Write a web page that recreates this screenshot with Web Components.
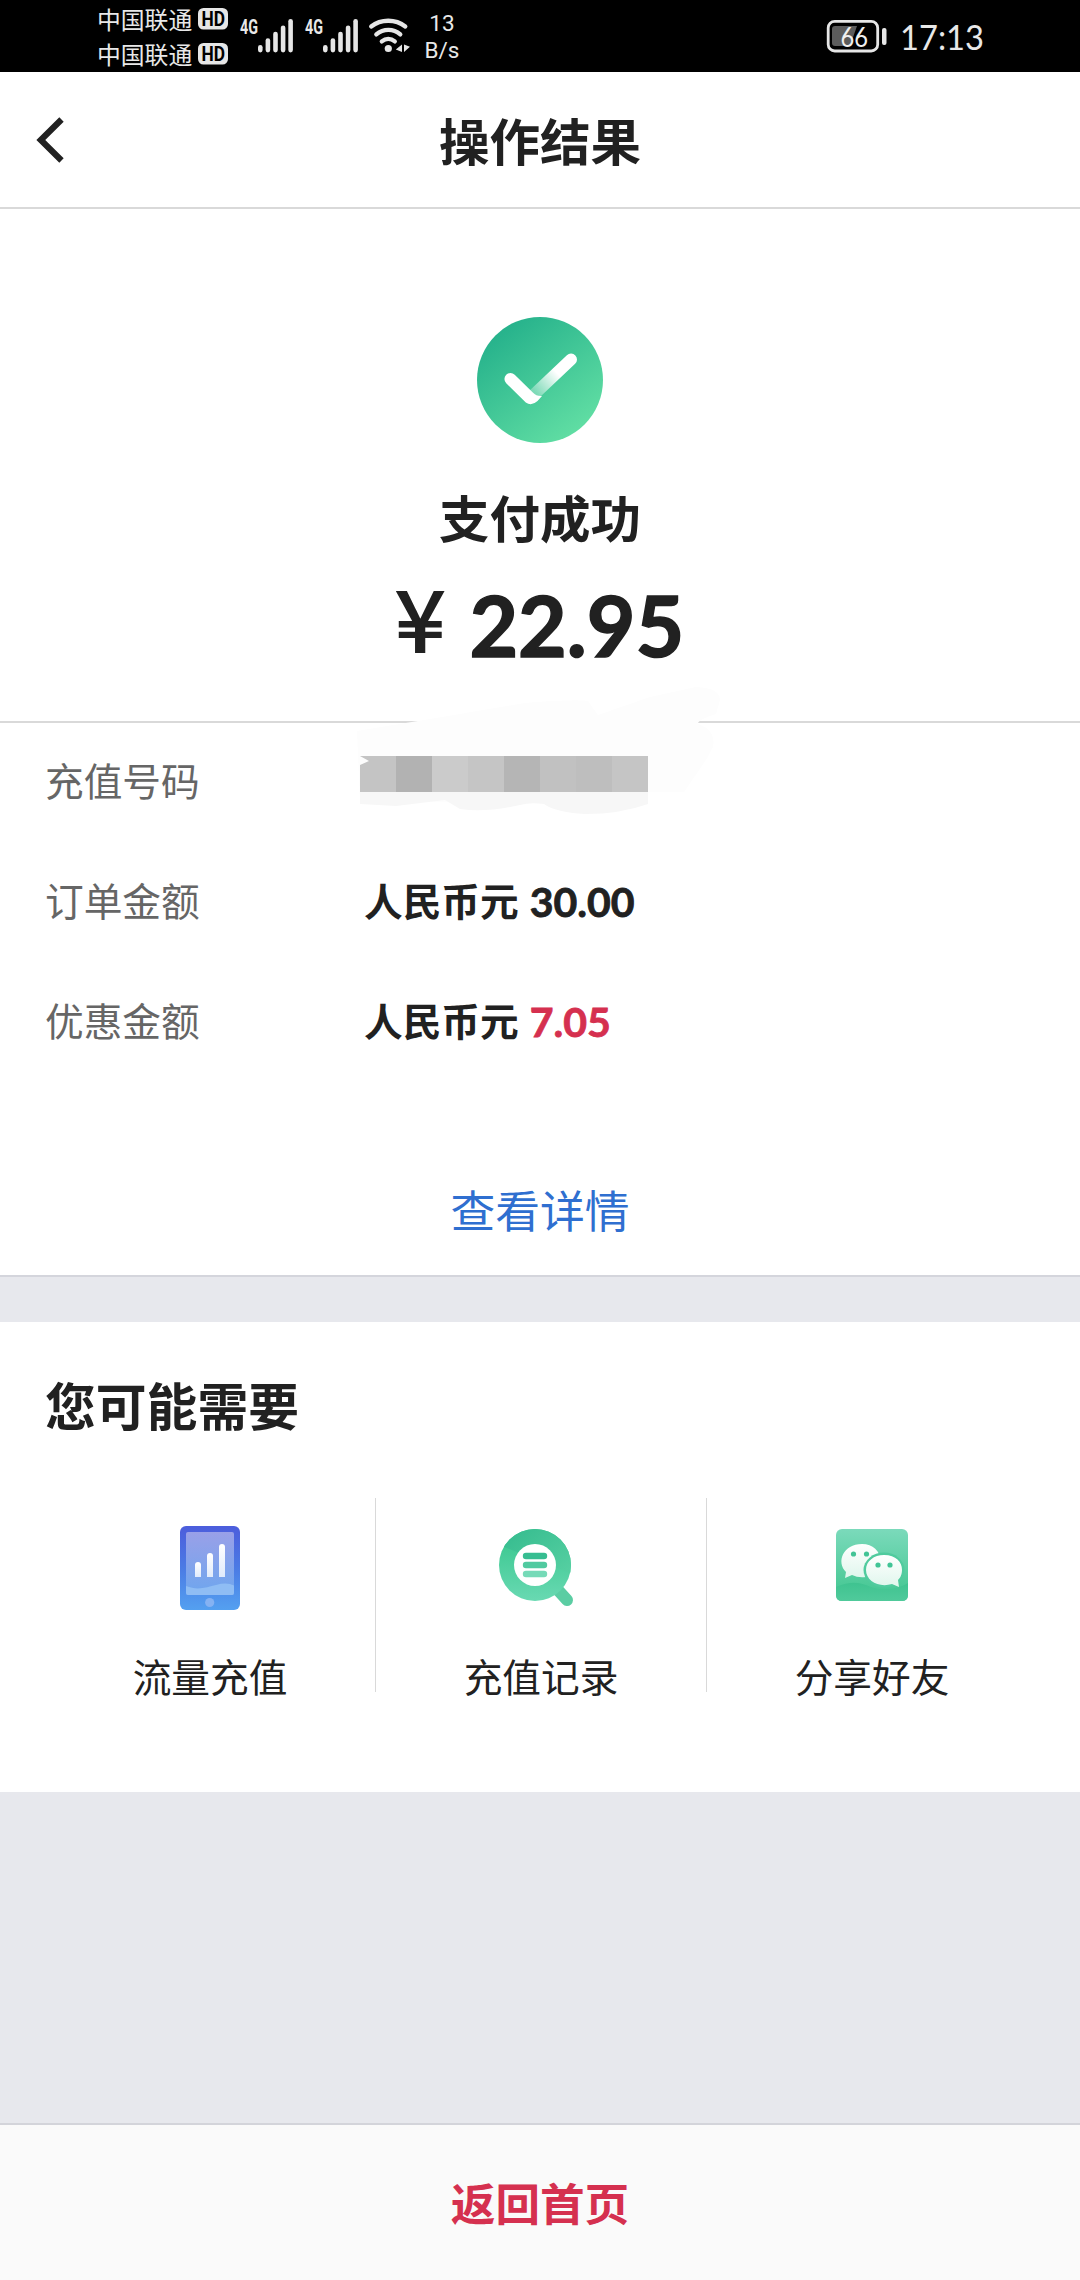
<!DOCTYPE html>
<html lang="zh-CN">
<head>
<meta charset="utf-8">
<meta name="viewport" content="width=1080">
<title>操作结果</title>
<style>
html,body{margin:0;padding:0}
body{width:1080px;height:2280px;overflow:hidden;background:#fff;color:#212121;font-family:"Noto Sans CJK SC",sans-serif}
</style>
</head>
<body>
<result-page></result-page>
<script>
const define = (name, html) => customElements.define(name, class extends HTMLElement {
  constructor() {
    super();
    const t = document.createElement('template');
    t.innerHTML = html;
    this.attachShadow({ mode: 'open' }).append(t.content.cloneNode(true));
  }
});

define('carrier-line', `
<style>
:host{display:flex;align-items:center;gap:6px;height:36px;font-size:23.800px;line-height:36px;color:#e8e8e8}
svg{display:block;overflow:visible}
</style>
<span><slot></slot></span>
<svg width="30" height="22" viewBox="0 0 30 22"><rect width="30" height="21.5" rx="5.5" fill="#e6e6e6"/>
<text x="3.5" y="17.8" font-family="Roboto" font-weight="700" font-size="19.5" fill="#000" textLength="23.5" lengthAdjust="spacingAndGlyphs">HD</text></svg>`);

define('signal-meter', `
<style>:host{display:block;width:55px;height:46px}svg{display:block;overflow:visible}</style>
<svg width="55" height="46" viewBox="0 0 55 46">
<text x="1" y="25.600" font-family="Roboto" font-weight="700" font-size="19.500" fill="#e8e8e8" textLength="18" lengthAdjust="spacingAndGlyphs">4G</text>
<g fill="#e6e6e6"><rect x="19" y="37" width="4.6" height="7.4" rx="2.3"/><rect x="26.6" y="30.3" width="4.6" height="14.1" rx="2.3"/><rect x="34.2" y="23.8" width="4.6" height="20.6" rx="2.3"/><rect x="41.8" y="17.4" width="4.6" height="27" rx="2.3"/><rect x="49.3" y="11" width="4.6" height="33.4" rx="2.3"/></g>
</svg>`);

define('status-bar', `
<style>
:host{display:flex;box-sizing:border-box;height:72px;padding:0 85px 0 97px;background:#000;color:#e8e8e8}
.carriers{width:142px;padding-top:1px;display:flex;flex-direction:column}
.carriers carrier-line+carrier-line{margin-top:-1px}
signal-meter{margin:8px 10px 0 0}
.wifi{margin:17px 0 0 -1px;width:42px;height:38px}
.speed{width:36px;margin:10px 0 0 14px;font:22.500px/27px Roboto,sans-serif;text-align:center}
.end{margin-left:auto;display:flex}
svg{display:block;overflow:visible}
</style>
<div class="carriers"><carrier-line>中国联通</carrier-line><carrier-line>中国联通</carrier-line></div>
<signal-meter></signal-meter><signal-meter></signal-meter>
<svg class="wifi" viewBox="0 0 42 38" fill="none" stroke="#e6e6e6" stroke-width="4.3" stroke-linecap="round">
<path d="M3.2 9.5C13 1.8 27.500 1.800 37.300 9.500M8.300 17.400C15.500 11.300 25.300 11.300 32.300 17.400M13.800 24.400C17.800 21.200 22.800 21.200 26.800 24.400"/>
<circle cx="20.300" cy="31.500" r="3.600" fill="#e6e6e6" stroke="none"/>
<path d="M34 27.500V35L27.800 32.500ZM36 27.500V35L42 29.800Z" fill="#e6e6e6" stroke="none"/></svg>
<div class="speed">13<br>B/s</div>
<div class="end">
<svg width="170" height="72" viewBox="0 0 170 72">
<rect x="3.200" y="21.400" width="49.500" height="29.600" rx="6.500" fill="none" stroke="#e6e6e6" stroke-width="2.800"/>
<path d="M10 26H32L25 46H10Q7 46 7 43V29Q7 26 10 26Z" fill="#5c5c5c"/>
<rect x="57" y="28" width="4.500" height="17" rx="2" fill="#e6e6e6"/>
<text x="15.500" y="46.500" font-family="Lato" font-size="26" fill="#f0f0f0" textLength="27.500" lengthAdjust="spacingAndGlyphs">66</text>
<text x="75" y="50" font-family="Lato" font-size="34.500" fill="#e8e8e8" textLength="84" lengthAdjust="spacingAndGlyphs">17:13</text>
</svg></div>`);

define('nav-header', `
<style>
:host{display:grid;grid-template-columns:100px 1fr 100px;align-items:center;box-sizing:border-box;height:137px;border-bottom:2px solid #d9d9d9;background:#fff}
h1{margin:0 0 1px;text-align:center;font-size:50.500px;font-weight:700;line-height:132px}
svg{display:block;margin-left:36px}
</style>
<svg width="30" height="46" viewBox="0 0 30 46"><path d="M25.500 2.500L4.800 23L25.500 43.500" fill="none" stroke="#212121" stroke-width="6.200"/></svg>
<h1><slot></slot></h1>`);

define('payment-summary', `
<style>
:host{display:flex;flex-direction:column;align-items:center;box-sizing:border-box;height:514px;padding-top:108px;border-bottom:2px solid #d9d9d9;background:#fff}
svg{display:block}
h2{margin:35px 0 0;font-size:50.500px;line-height:76px;font-weight:700}
.amount{display:flex;align-items:baseline;height:120px;margin:7px 0 0 1px;font-family:Lato,sans-serif;font-weight:700;font-size:84px;line-height:120px;-webkit-text-stroke:1.500px #212121}
.yen{font-family:"Noto Sans CJK SC",sans-serif;font-weight:400;margin-right:26px;transform:translateY(-5px) scaleX(1.07);-webkit-text-stroke:2px #212121}
</style>
<svg width="126" height="126" viewBox="0 0 126 126"><defs>
<linearGradient id="a" x1=".15" y1=".1" x2=".8" y2=".95"><stop stop-color="#25b18b"/><stop offset="1" stop-color="#62dfa4"/></linearGradient>
<linearGradient id="b" gradientUnits="userSpaceOnUse" x1="59" y1="76" x2="80" y2="56"><stop stop-color="#fff" stop-opacity=".3"/><stop offset="1" stop-color="#fff"/></linearGradient></defs>
<circle cx="63" cy="63" r="63" fill="url(#a)"/>
<path d="M57 77.500L94 42.500" stroke="url(#b)" stroke-width="12" stroke-linecap="round"/>
<path d="M29.200 66.300A6 6 0 0 1 37.700 57.800L55.800 75.500Q59.500 79.500 65 79L60.500 84Q54.500 89.500 48.800 85.500Z" fill="#fff"/>
</svg>
<h2><slot name="status"></slot></h2>
<div class="amount"><span class="yen">¥</span><slot name="amount"></slot></div>`);

define('detail-row', `
<style>
:host{display:flex;height:120px;align-items:center;padding-left:45px;font-size:38.700px;line-height:56px}
.label{width:319px;color:#666}
.value{display:flex;align-items:baseline;font-weight:600;color:#212121}
::slotted(b){font-family:Lato,sans-serif;font-weight:700;font-size:41px;line-height:50px;margin-left:11px;-webkit-text-stroke:.800px currentColor;transform:translateY(1px)}
</style>
<div class="label"><slot name="label"></slot></div><div class="value"><slot></slot></div>`);

define('masked-number', `
<style>:host{position:absolute;left:340px;top:-53px;width:400px;height:160px}svg{display:block}</style>
<svg width="400" height="160" viewBox="0 0 400 160">
<path d="M17 61L84 50L185 33Q235 29 248 31L258 45L310 27L356 17Q380 18 380 30L376 44Q357 50 358 54Q376 60 373 77L366 90L344 122H308L300 132L20 132Z" fill="#fdfdfd"/>
<path d="M20 122H308V134Q280 144 245 144Q215 142 204 134Q190 132 180 135Q145 143 120 139L105 130L56 136L20 134Z" fill="#f7f7f7"/>
<g><path d="M20 86H56V122H20V95L29 91Z" fill="#c4c4c4"/><rect x="56" y="86" width="36" height="36" fill="#b2b2b2"/><rect x="92" y="86" width="36" height="36" fill="#cbcbcb"/><rect x="128" y="86" width="36" height="36" fill="#c5c5c5"/><rect x="164" y="86" width="36" height="36" fill="#b5b5b5"/><rect x="200" y="86" width="36" height="36" fill="#c1c1c1"/><rect x="236" y="86" width="36" height="36" fill="#bebebe"/><rect x="272" y="86" width="36" height="36" fill="#c5c5c5"/></g>
</svg>`);

define('order-details', `
<style>
:host{display:flex;flex-direction:column;position:relative;box-sizing:border-box;height:554px;border-bottom:2px solid #d4d5dc;background:#fff}
.rows{display:flex;flex-direction:column;margin-top:-4px}
.link{margin-top:97px;text-align:center;font-size:44.800px;line-height:66px;color:#2f6fd0}
</style>
<masked-number></masked-number>
<div class="rows"><slot></slot></div>
<div class="link"><slot name="link"></slot></div>`);

define('service-item', `
<style>
:host{flex:1;box-sizing:border-box;display:flex;flex-direction:column;align-items:center;height:194px;border-right:1px solid #d9d9d9}
:host(:last-child){border-right:0}
.icon{flex:none;height:134px;padding-top:22px;box-sizing:border-box}
span{flex:none;font-size:38.700px;line-height:56px;margin-top:15px}
::slotted(svg){display:block}
</style>
<div class="icon"><slot name="icon"></slot></div><span><slot></slot></span>`);

define('service-panel', `
<style>
:host{display:block;box-sizing:border-box;height:470px;margin-top:45px;padding:44px 43px 0 45px;background:#fff}
h3{margin:0 0 56px;font-size:50.800px;line-height:76px;font-weight:700}
.items{display:flex}
</style>
<h3><slot name="title"></slot></h3>
<div class="items">
<service-item><svg slot="icon" width="74" height="96" viewBox="0 0 74 96"><defs>
<linearGradient id="p" x2="0" y2="1"><stop stop-color="#4c5ddc"/><stop offset=".5" stop-color="#4b7be4"/><stop offset="1" stop-color="#54a0f0"/></linearGradient>
<linearGradient id="s" x2="0" y2="1"><stop stop-color="#99a0e8"/><stop offset="1" stop-color="#6ea6ee"/></linearGradient>
<linearGradient id="w" x2="0" y2="1"><stop stop-color="#fff"/><stop offset="1" stop-color="#e1ebfb"/></linearGradient></defs>
<rect x="7" y="6" width="60" height="84" rx="6" fill="url(#p)"/>
<rect x="13" y="12" width="48" height="63" rx="2" fill="url(#s)"/>
<path d="M13 66C25 71 34 67 43 65Q54 62 61 65.500V73Q61 75 59 75H15Q13 75 13 73Z" fill="#8fbdf4"/>
<g fill="url(#w)"><path d="M22 57V45a3 3 0 0 1 6 0V57Z"/><path d="M34 57V36a3 3 0 0 1 6 0V57Z"/><path d="M46 57V27a3 3 0 0 1 6 0V57Z"/></g>
<circle cx="36.700" cy="82.500" r="4.600" fill="#85b2f2"/></svg>流量充值</service-item>
<service-item><svg slot="icon" width="84" height="96" viewBox="499 1520 84 96"><defs>
<linearGradient id="q" x2="1" y2="1"><stop stop-color="#31b98c"/><stop offset="1" stop-color="#5ad2a4"/></linearGradient>
<linearGradient id="r" x2="0" y2="1"><stop stop-color="#34c58b"/><stop offset="1" stop-color="#69d9b2"/></linearGradient>
<clipPath id="c"><circle cx="535" cy="1565" r="36"/></clipPath></defs>
<path d="M557 1589L567 1600" stroke="#5bcda3" stroke-width="12" stroke-linecap="round"/>
<circle cx="535" cy="1565" r="36" fill="url(#r)"/>
<path clip-path="url(#c)" d="M504 1547L580 1577V1520H504Z" fill="url(#q)"/>
<circle cx="535" cy="1565" r="21" fill="#fff"/>
<g stroke-width="6.400" stroke-linecap="round"><path d="M526 1556H544" stroke="#37bd91"/><path d="M526 1565H544" stroke="#51caa0"/><path d="M526 1574H544" stroke="#76dab8"/></g></svg>充值记录</service-item>
<service-item><svg slot="icon" width="72" height="96" viewBox="836 1520 72 96"><defs>
<linearGradient id="g" x2="0" y2="1"><stop stop-color="#7bdabb"/><stop offset="1" stop-color="#3fc58e"/></linearGradient>
<linearGradient id="v" x2="0" y2="1"><stop stop-color="#3fc390"/><stop offset="1" stop-color="#50ca9b"/></linearGradient>
<linearGradient id="u" x2="0" y2="1"><stop stop-color="#fff"/><stop offset="1" stop-color="#dff6ec"/></linearGradient></defs>
<rect x="836" y="1529" width="72" height="72" rx="6" fill="url(#g)"/>
<path d="M836 1587C852 1580 861 1583 871 1587C884 1592 900 1588 908 1583V1595Q908 1601 902 1601H842Q836 1601 836 1595Z" fill="url(#v)"/>
<path d="M846 1572C836 1562 843 1544 862 1544C873 1544 880 1551 881 1561L866 1577Q858 1578 852 1575L845 1578Z" fill="url(#u)"/>
<ellipse cx="884" cy="1570" rx="20.500" ry="17.500" fill="#50cb9e"/>
<path d="M884 1555C896 1555 902 1562 902 1570C902 1576 899 1579 898 1580L899 1587L892 1584C879 1588 866 1581 866 1570C866 1561 874 1555 884 1555Z" fill="url(#u)"/>
<g fill="#42c496"><circle cx="853.500" cy="1554" r="2.600"/><circle cx="866.500" cy="1554" r="2.600"/><circle cx="878" cy="1565" r="2.600"/><circle cx="890" cy="1565" r="2.600"/></g></svg>分享好友</service-item>
</div>`);

define('home-button', `
<style>
:host{display:flex;justify-content:center;box-sizing:border-box;height:157px;padding-top:44px;border-top:2px solid #d3d4da;background:#fafafa;color:#d5304f;font-size:44.600px;line-height:66px;font-weight:700}
</style><slot></slot>`);

define('result-page', `
<style>
:host{display:flex;flex-direction:column;width:1080px;height:2280px;background:#e7e8ed}
home-button{margin-top:auto}
</style>
<status-bar></status-bar>
<nav-header>操作结果</nav-header>
<payment-summary><span slot="status">支付成功</span><span slot="amount">22.95</span></payment-summary>
<order-details>
<detail-row><span slot="label">充值号码</span></detail-row>
<detail-row><span slot="label">订单金额</span>人民币元<b>30.00</b></detail-row>
<detail-row><span slot="label">优惠金额</span>人民币元<b style="color:#d5304f">7.05</b></detail-row>
<span slot="link">查看详情</span>
</order-details>
<service-panel><span slot="title">您可能需要</span></service-panel>
<home-button>返回首页</home-button>`);
</script>
</body>
</html>
